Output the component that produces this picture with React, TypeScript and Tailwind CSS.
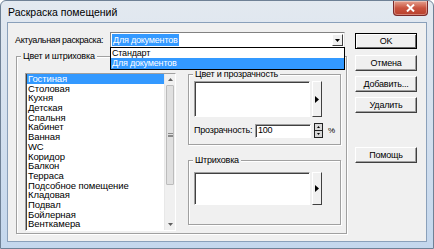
const items = [
  "Гостиная",
  "Столовая",
  "Кухня",
  "Детская",
  "Спальня",
  "Кабинет",
  "Ванная",
  "WC",
  "Коридор",
  "Балкон",
  "Терраса",
  "Подсобное помещение",
  "Кладовая",
  "Подвал",
  "Бойлерная",
  "Венткамера",
];

function Btn({ label, def, className }: { label: string; def?: boolean; className?: string }) {
  return (
    <div
      className={
        "w-[62px] h-[16px] flex items-center justify-center bg-[#f0f0f0] text-black " +
        (def
          ? "border border-black shadow-[inset_1px_1px_0_#fff,inset_-1px_-1px_0_#696969] "
          : "border border-t-white border-l-white border-b-[#404040] border-r-[#404040] shadow-[inset_-1px_-1px_0_#a0a0a0] ") +
        (className ?? "")
      }
    >
      {label}
    </div>
  );
}

function Arrow({ h }: { h: string }) {
  return (
    <div
      className={
        "w-[10px] ml-[2px] flex items-center justify-center bg-[#f0f0f0] border border-t-white border-l-white border-b-[#404040] border-r-[#404040] " +
        h
      }
    >
      <svg width="4" height="7" viewBox="0 0 4 7">
        <path d="M0 0 L4 3.5 L0 7 Z" fill="#000" />
      </svg>
    </div>
  );
}

function Group({
  label,
  className,
  children,
}: {
  label: string;
  className?: string;
  children?: React.ReactNode;
}) {
  return (
    <div
      className={
        "relative border border-[#a0a0a0] shadow-[inset_1px_1px_0_#fff,1px_1px_0_#fff] " + (className ?? "")
      }
    >
      <span className="absolute -top-[6px] left-[4px] px-[2px] bg-[#f0f0f0] leading-[11px] text-black whitespace-nowrap">
        {label}
      </span>
      {children}
    </div>
  );
}

export default function App() {
  return (
    <div
      className="w-[434px] h-[249px] bg-gradient-to-b from-[#e3e9f0] to-[#c4d7ed] border border-[#6f8196] rounded-t-[6px] flex flex-col px-[6px] pb-[6px] overflow-hidden"
      style={{ fontFamily: '"Liberation Sans", Arial, sans-serif' }}
    >
      <div className="h-[21px] flex items-start">
        <span className="mt-[5px] ml-[1px] text-[10.5px] leading-[12px] text-black">Раскраска помещений</span>
        <div className="ml-auto mr-[-1px] w-[35px] h-[15px] rounded-b-[4px] border border-t-0 border-[#7a2a2a] bg-gradient-to-b from-[#e3a08f] via-[#c9533f] to-[#b8402c] flex items-center justify-center shadow-[inset_0_0_0_1px_rgba(255,255,255,0.35)]">
          <svg width="9" height="8" viewBox="0 0 9 8">
            <path d="M1 0.5 L8 7.5 M8 0.5 L1 7.5" stroke="#fff" strokeWidth="2" />
          </svg>
        </div>
      </div>
      <div className="flex-1 bg-[#f0f0f0] border border-[#8aa0ba] flex pt-[9px] pl-[7px] text-[9px] leading-[11px] tracking-[-0.2px] text-black">
        {/* left column */}
        <div className="w-[333px] flex flex-col">
          <div className="relative flex items-center h-[16px]">
            <span className="w-[95px] whitespace-nowrap tracking-[-0.35px]">Актуальная раскраска:</span>
            <div className="w-[235px] h-[16px] bg-white border border-t-[#828282] border-l-[#828282] border-b-[#e3e3e3] border-r-[#e3e3e3] flex items-center pl-[1px]">
              <span className="bg-[#3399ff] text-white px-[1px] leading-[12px]">Для документов</span>
              <div className="ml-auto mr-[1px] w-[11px] h-[12px] bg-[#f0f0f0] border border-t-white border-l-white border-b-[#404040] border-r-[#404040] flex items-center justify-center">
                <svg width="5" height="3" viewBox="0 0 5 3">
                  <path d="M0 0 L5 0 L2.5 3 Z" fill="#000" />
                </svg>
              </div>
            </div>
            <div className="absolute left-[95px] top-[15px] w-[235px] h-[23px] bg-white border border-black z-10 flex flex-col">
              <div className="h-[10px] leading-[10px] pl-[1px]">Стандарт</div>
              <div className="h-[11px] leading-[11px] pl-[1px] bg-[#3399ff] text-white">Для документов</div>
            </div>
          </div>
          <Group label="Цвет и штриховка" className="mt-[8px] ml-[1px] w-[331px] h-[178px]">
            <div className="flex pl-[8px] pt-[15px]">
              {/* list box */}
              <div className="mt-[1px] w-[151px] h-[158px] bg-white border border-t-[#a0a0a0] border-l-[#a0a0a0] border-b-white border-r-white shadow-[inset_1px_1px_0_#404040] flex overflow-hidden">
                <div className="flex-1 pl-[1px] text-[9.5px] tracking-[-0.1px]">
                  {items.map((it, i) => (
                    <div
                      key={it}
                      className={
                        "h-[9.7px] leading-[9.7px] pl-[1px] whitespace-nowrap " +
                        (i === 0 ? "bg-[#3399ff] text-white" : "")
                      }
                    >
                      {it}
                    </div>
                  ))}
                </div>
                <div className="w-[11px] bg-[#f0f0f0] flex flex-col border-l border-[#e8e8e8]">
                  <div className="h-[11px] flex items-center justify-center">
                    <svg width="5" height="3" viewBox="0 0 5 3">
                      <path d="M0 3 L5 3 L2.5 0 Z" fill="#606060" />
                    </svg>
                  </div>
                  <div className="mx-[1px] h-[100px] bg-[#e0e0e0] border border-[#bcbcbc] rounded-[1px] flex items-center justify-center">
                    <div className="w-[5px] h-[4px] border-y border-[#8a8a8a] flex items-center">
                      <div className="w-full h-[1px] bg-[#8a8a8a]" />
                    </div>
                  </div>
                  <div className="mt-auto h-[11px] flex items-center justify-center">
                    <svg width="5" height="3" viewBox="0 0 5 3">
                      <path d="M0 0 L5 0 L2.5 3 Z" fill="#606060" />
                    </svg>
                  </div>
                </div>
              </div>
              {/* right column */}
              <div className="ml-[12px] mt-[2px] flex flex-col">
                <Group label="Цвет и прозрачность" className="w-[153px] h-[71px]">
                  <div className="pl-[5px] pt-[6px] flex flex-col">
                    <div className="flex">
                      <div className="w-[116px] h-[36px] bg-white border border-t-[#a0a0a0] border-l-[#a0a0a0] border-b-white border-r-white shadow-[inset_1px_1px_0_#404040]" />
                      <Arrow h="h-[36px]" />
                    </div>
                    <div className="flex items-center mt-[6px]">
                      <span className="w-[61px] whitespace-nowrap">Прозрачность:</span>
                      <div className="w-[56px] h-[14px] bg-white border border-t-[#a0a0a0] border-l-[#a0a0a0] border-b-white border-r-white shadow-[inset_1px_1px_0_#404040] pl-[2px] flex items-center">
                        100
                      </div>
                      <div className="ml-[3px] w-[9px] h-[15px] bg-[#222] p-[1px] flex flex-col gap-[1px]">
                        <div className="flex-1 bg-[#d8d8d8] flex items-center justify-center">
                          <svg width="3" height="2" viewBox="0 0 3 2">
                            <path d="M0 2 L3 2 L1.5 0 Z" fill="#000" />
                          </svg>
                        </div>
                        <div className="flex-1 bg-[#d8d8d8] flex items-center justify-center">
                          <svg width="3" height="2" viewBox="0 0 3 2">
                            <path d="M0 0 L3 0 L1.5 2 Z" fill="#000" />
                          </svg>
                        </div>
                      </div>
                      <span className="ml-[5px] text-[8px]">%</span>
                    </div>
                  </div>
                </Group>
                <Group label="Штриховка" className="mt-[15px] w-[153px] h-[65px]">
                  <div className="pl-[5px] pt-[11px] flex">
                    <div className="w-[116px] h-[33px] bg-white border border-t-[#a0a0a0] border-l-[#a0a0a0] border-b-white border-r-white shadow-[inset_1px_1px_0_#404040]" />
                    <Arrow h="h-[33px]" />
                  </div>
                </Group>
              </div>
            </div>
          </Group>
        </div>
        {/* right buttons */}
        <div className="ml-[7px] flex flex-col">
          <Btn label="OK" def className="mt-[1px]" />
          <Btn label="Отмена" className="mt-[6px]" />
          <Btn label="Добавить..." className="mt-[5px]" />
          <Btn label="Удалить" className="mt-[5px]" />
          <Btn label="Помощь" className="mt-[34px]" />
        </div>
      </div>
    </div>
  );
}
